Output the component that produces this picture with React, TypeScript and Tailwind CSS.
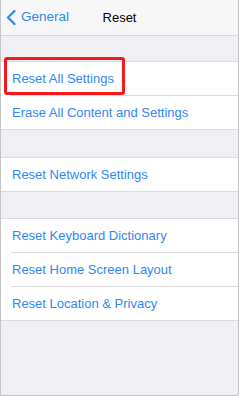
const groups = [
  ["Reset All Settings", "Erase All Content and Settings"],
  ["Reset Network Settings"],
  ["Reset Keyboard Dictionary", "Reset Home Screen Layout", "Reset Location & Privacy"],
];

const Row = ({ label, first, highlight }: { label: string; first: boolean; highlight?: boolean }) => (
  <div className="relative">
    {!first && <div className="ml-[10px] h-px bg-[#dcdce0]" />}
    <div className="flex h-[33px] items-center pl-[11px] text-[13px] text-[#2f87f5]">{label}</div>
    {highlight && (
      <div className="absolute left-[3px] top-[-5px] h-[38px] w-[121px] rounded-[3px] border-[3px] border-[#f5191c]" />
    )}
  </div>
);

export default function App() {
  return (
    <div
      className="flex h-[396px] w-[239px] flex-col border-x border-b border-[#c4c4c4] bg-[#efeff4]"
      style={{ fontFamily: '"Liberation Sans", Arial, sans-serif' }}
    >
      {/* nav bar */}
      <div className="relative flex h-[36px] items-center border-b border-[#d6d6da] bg-[#f7f7f8]">
        <div className="flex items-center pl-[5px] text-[13.5px] text-[#2f87f5]">
          <svg width="10" height="15" viewBox="0 0 10 15" fill="none">
            <polyline points="8.5,1 2,7.5 8.5,14" stroke="#2f87f5" strokeWidth="2.2" strokeLinecap="round" strokeLinejoin="round" />
          </svg>
          <span className="ml-[5px]">General</span>
        </div>
        <div className="absolute left-0 right-0 text-center text-[13px] font-medium text-black">Reset</div>
      </div>

      <div className="mt-[25px] flex flex-col">
        {groups.map((group, gi) => (
          <div
            key={gi}
            className={`border-y border-[#dcdce0] bg-white ${gi === 1 ? "mt-[27px]" : ""} ${gi === 2 ? "mt-[26px]" : ""}`}
          >
            {group.map((label, i) => (
              <Row key={label} label={label} first={i === 0} highlight={gi === 0 && i === 0} />
            ))}
          </div>
        ))}
      </div>
    </div>
  );
}
